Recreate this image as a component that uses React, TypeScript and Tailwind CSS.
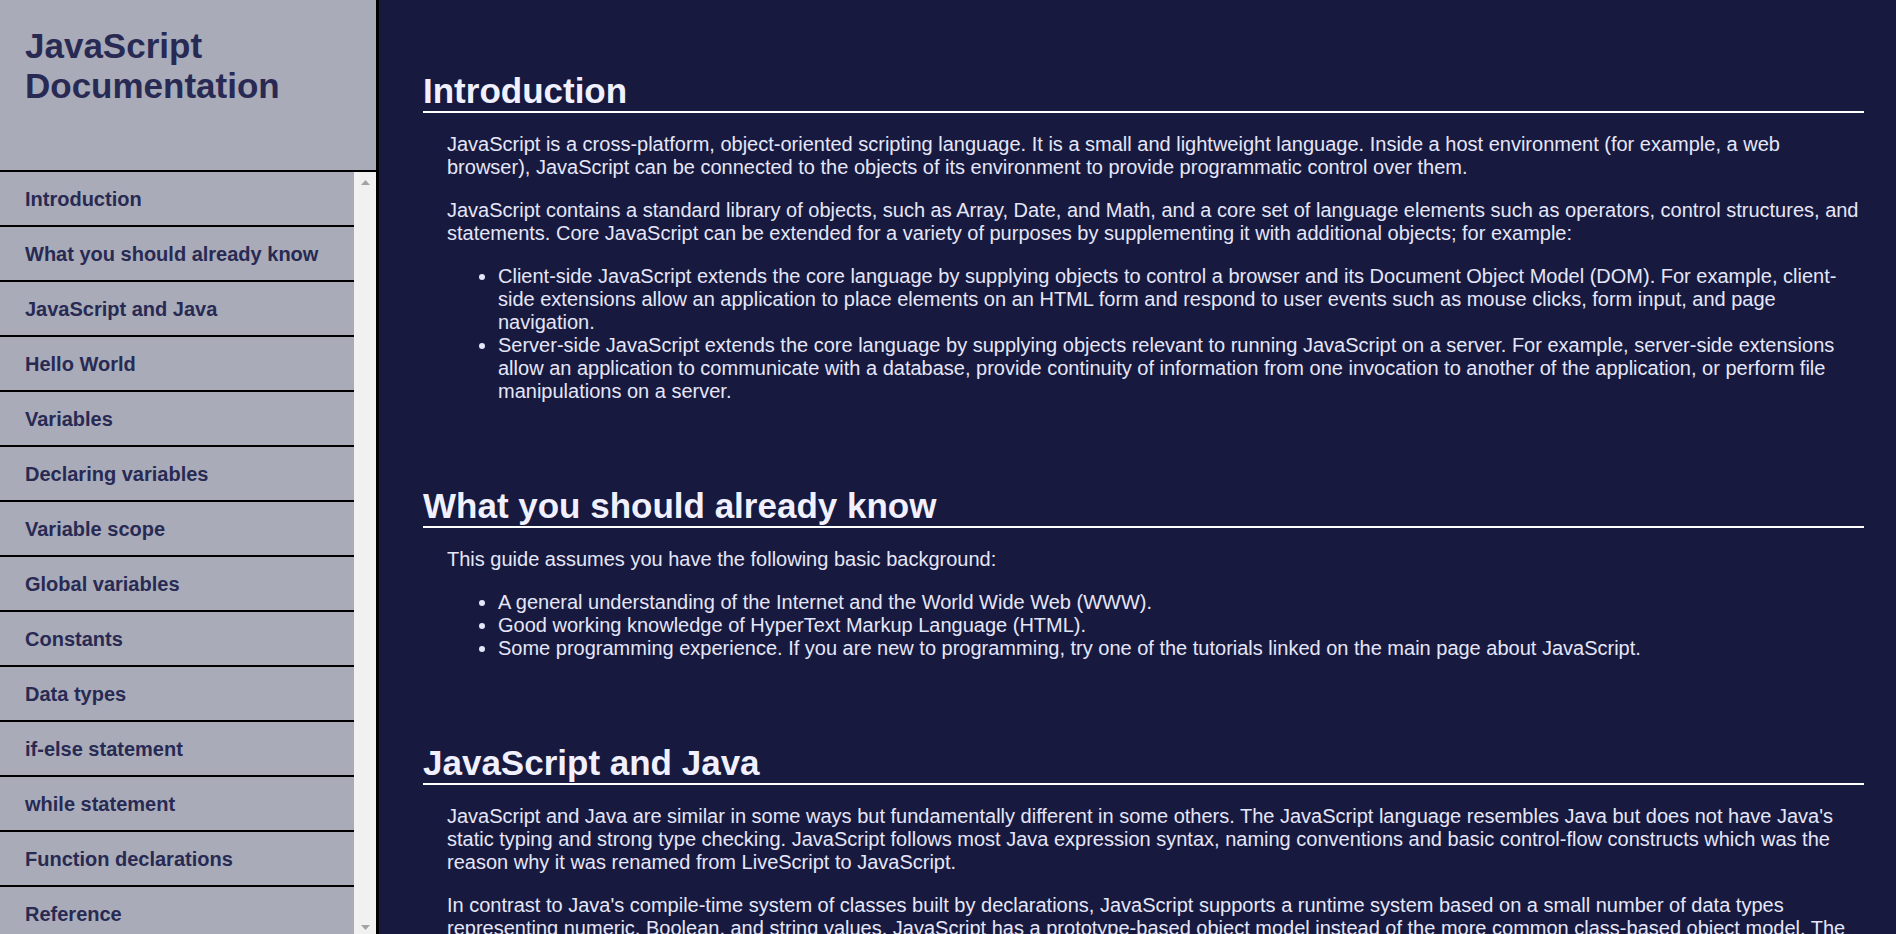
const navItems = [
  "Introduction",
  "What you should already know",
  "JavaScript and Java",
  "Hello World",
  "Variables",
  "Declaring variables",
  "Variable scope",
  "Global variables",
  "Constants",
  "Data types",
  "if-else statement",
  "while statement",
  "Function declarations",
  "Reference",
];

interface Section {
  title: string;
  paragraphs: string[];
  list?: string[];
}

const sections: Section[] = [
  {
    title: "Introduction",
    paragraphs: [
      "JavaScript is a cross-platform, object-oriented scripting language. It is a small and lightweight language. Inside a host environment (for example, a web browser), JavaScript can be connected to the objects of its environment to provide programmatic control over them.",
      "JavaScript contains a standard library of objects, such as Array, Date, and Math, and a core set of language elements such as operators, control structures, and statements. Core JavaScript can be extended for a variety of purposes by supplementing it with additional objects; for example:",
    ],
    list: [
      "Client-side JavaScript extends the core language by supplying objects to control a browser and its Document Object Model (DOM). For example, client-side extensions allow an application to place elements on an HTML form and respond to user events such as mouse clicks, form input, and page navigation.",
      "Server-side JavaScript extends the core language by supplying objects relevant to running JavaScript on a server. For example, server-side extensions allow an application to communicate with a database, provide continuity of information from one invocation to another of the application, or perform file manipulations on a server.",
    ],
  },
  {
    title: "What you should already know",
    paragraphs: ["This guide assumes you have the following basic background:"],
    list: [
      "A general understanding of the Internet and the World Wide Web (WWW).",
      "Good working knowledge of HyperText Markup Language (HTML).",
      "Some programming experience. If you are new to programming, try one of the tutorials linked on the main page about JavaScript.",
    ],
  },
  {
    title: "JavaScript and Java",
    paragraphs: [
      "JavaScript and Java are similar in some ways but fundamentally different in some others. The JavaScript language resembles Java but does not have Java's static typing and strong type checking. JavaScript follows most Java expression syntax, naming conventions and basic control-flow constructs which was the reason why it was renamed from LiveScript to JavaScript.",
      "In contrast to Java's compile-time system of classes built by declarations, JavaScript supports a runtime system based on a small number of data types representing numeric, Boolean, and string values. JavaScript has a prototype-based object model instead of the more common class-based object model. The prototype-based model provides dynamic inheritance; that is, what is inherited can vary for individual objects. JavaScript also supports functions without any special declarative requirements. Functions can be properties of objects, executing as loosely typed methods.",
    ],
  },
];

export default function App() {
  return (
    <div className="flex h-screen overflow-hidden font-['Liberation_Sans',Arial,sans-serif] text-[20px] leading-[normal]">
      <aside className="flex w-[379px] shrink-0 flex-col border-r-[3px] border-black bg-[#a9abb9]">
        <header className="h-[172px] shrink-0 border-b-2 border-black pl-[25px] pr-[20px] pt-[26px]">
          <h1 className="text-[35px] font-bold text-[#282a53]">JavaScript Documentation</h1>
        </header>
        <div className="flex min-h-0 flex-1">
          <nav className="min-w-0 flex-1 overflow-hidden">
            {navItems.map((item) => (
              <a
                key={item}
                href={"#" + item.replace(/ /g, "_")}
                className="block h-[55px] border-b-2 border-black pl-[25px] pt-[15.5px] font-bold text-[#282a53]"
              >
                {item}
              </a>
            ))}
          </nav>
          {/* scrollbar */}
          <div className="flex w-[22px] shrink-0 flex-col items-center justify-between bg-[#f1f1f1] pb-[4px] pt-[8px]">
            <svg width="9" height="5" viewBox="0 0 9 5">
              <path d="M0 5 L4.5 0 L9 5 Z" fill="#a3a3a3" />
            </svg>
            <svg width="9" height="5" viewBox="0 0 9 5">
              <path d="M0 0 L4.5 5 L9 0 Z" fill="#a3a3a3" />
            </svg>
          </div>
        </div>
      </aside>

      <main className="min-w-0 flex-1 overflow-hidden bg-[#171a3e] pl-[44px] pr-[32px] pt-[8px] text-[#e6e6fa]">
        {sections.map((section) => (
          <section key={section.title} className="pt-[63px]">
            <h2 className="border-b-2 border-white text-[35px] font-bold text-[#f0f0ff]">
              {section.title}
            </h2>
            <div className="pb-[20px] pl-[24px]">
              {section.paragraphs.map((p, i) => (
                <p key={i} className="mt-[20px]">
                  {p}
                </p>
              ))}
              {section.list && (
                <ul className="mt-[20px] list-disc pl-[51px]">
                  {section.list.map((li, i) => (
                    <li key={i}>{li}</li>
                  ))}
                </ul>
              )}
            </div>
          </section>
        ))}
      </main>
    </div>
  );
}
